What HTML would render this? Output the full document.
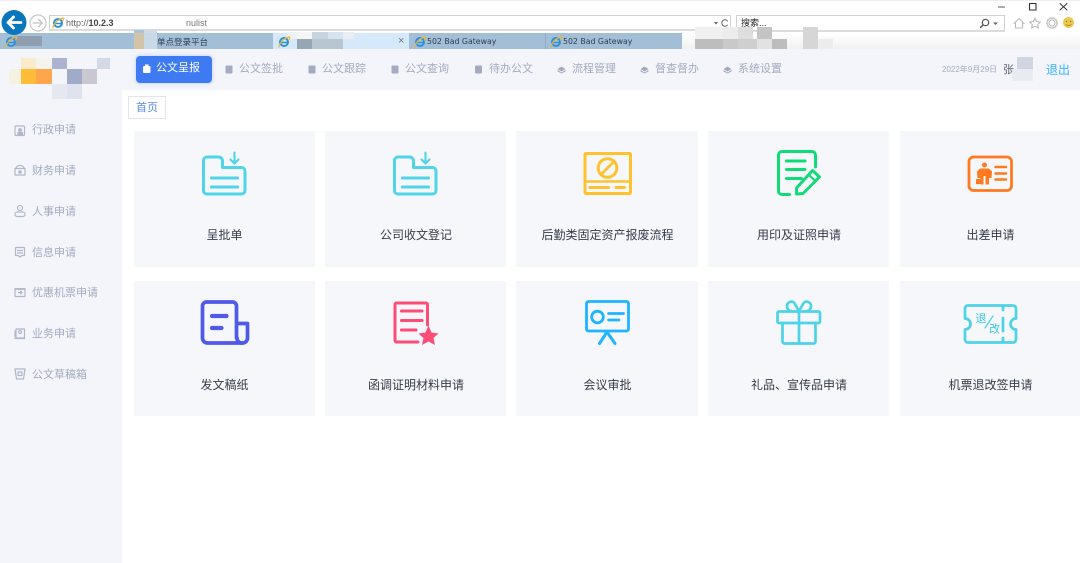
<!DOCTYPE html>
<html lang="zh"><head><meta charset="utf-8"><title>公文呈报</title>
<style>
*{box-sizing:border-box}
html,body{margin:0;padding:0;width:1080px;height:563px;overflow:hidden;background:#fff;font-family:"Liberation Sans","Noto Sans CJK SC",sans-serif}
#w{position:absolute;left:0;top:0;width:1080px;height:563px;overflow:hidden;filter:blur(.3px)}
.a{position:absolute}
.t{position:absolute;white-space:nowrap;line-height:16px}
.nav{color:#a4abc0;font-size:11px;top:61px}
.side{color:#a4abc0;font-size:11px;left:32px}
.card{position:absolute;background:#f6f7fb}
.lab{position:absolute;font-size:12px;color:#373c4a;white-space:nowrap;line-height:16px;transform:translateX(-50%)}
.m{position:absolute}
.tabt{position:absolute;top:36px;font:7.8px/12px "DejaVu Sans",sans-serif;color:#2c3e50;white-space:nowrap}
svg{position:absolute;left:0;top:0}
</style></head><body><div id="w">
<div class="a" style="left:0;top:0;width:1080px;height:1px;background:#f0f0f0"></div>
<div class="a" style="left:49px;top:15px;width:682px;height:16px;border:1px solid #d0d0d0;border-bottom:2px solid #dcdcdc;background:#fff"></div>
<div class="a" style="left:736px;top:15px;width:269px;height:17px;border:1px solid #d0d0d0;border-bottom:2px solid #dcdcdc;background:#fff"></div>
<div class="t" style="left:66px;top:15px;font-size:9px;color:#666">http://<b style="color:#444;font-weight:700">10.2.3</b></div>
<div class="t" style="left:186px;top:15px;font-size:9px;color:#777">nulist</div>
<div class="t" style="left:741px;top:15px;font-size:9px;color:#222">搜索...</div>

<!-- tab strip -->
<div class="a" style="left:0;top:33px;width:683px;height:16px;background:#a3bfd7"></div>
<div class="a" style="left:273px;top:33px;width:136px;height:16px;background:#d6e9fa"></div>
<div class="a" style="left:545px;top:33px;width:1px;height:16px;background:#93aec7"></div>
<div class="a" style="left:682px;top:33px;width:398px;height:16px;background:linear-gradient(#fff,#f1f1f1)"></div>
<div class="t" style="left:157px;top:34px;font-size:8.5px;color:#2d3d4d">单点登录平台</div>
<div class="tabt" style="left:427px">502 Bad Gateway</div>
<div class="tabt" style="left:563px">502 Bad Gateway</div>
<div class="t" style="left:398px;top:33px;font-size:11px;color:#777">×</div>

<!-- mosaics tab strip -->
<div class="m" style="left:134px;top:30px;width:10px;height:3px;background:#a9c3d8"></div>
<div class="m" style="left:144px;top:30px;width:13px;height:3px;background:#cfdce8"></div>
<div class="m" style="left:134px;top:33px;width:10px;height:19px;background:#d2c4a8"></div>
<div class="m" style="left:144px;top:33px;width:13px;height:19px;background:#c8d9e8"></div>
<div class="m" style="left:14px;top:36px;width:28px;height:10px;background:#8f9faf"></div>
<div class="m" style="left:287px;top:32px;width:10px;height:7px;background:#eef2f5"></div>
<div class="m" style="left:297px;top:32px;width:15px;height:7px;background:#f3f5f7"></div>
<div class="m" style="left:312px;top:32px;width:16px;height:7px;background:#c7d3dd"></div>
<div class="m" style="left:328px;top:32px;width:15px;height:7px;background:#d7e4ef"></div>
<div class="m" style="left:343px;top:32px;width:11px;height:7px;background:#e8eef2"></div>
<div class="m" style="left:297px;top:39px;width:15px;height:10px;background:#97a6b3"></div>
<div class="m" style="left:312px;top:39px;width:31px;height:10px;background:#b8c6d1"></div>
<div class="m" style="left:695px;top:39px;width:28px;height:10px;background:#bdbdbd"></div>
<div class="m" style="left:695px;top:27px;width:28px;height:12px;background:#f0f0f0"></div>
<div class="m" style="left:723px;top:27px;width:15px;height:12px;background:#ececec"></div>
<div class="m" style="left:738px;top:27px;width:15px;height:12px;background:#dedede"></div>
<div class="m" style="left:757px;top:27px;width:15px;height:12px;background:#c4c4c4"></div>
<div class="m" style="left:723px;top:39px;width:15px;height:10px;background:#c9c9c9"></div>
<div class="m" style="left:738px;top:39px;width:19px;height:10px;background:#cfcfcf"></div>
<div class="m" style="left:757px;top:39px;width:15px;height:10px;background:#e2e2e2"></div>
<div class="m" style="left:772px;top:39px;width:15px;height:10px;background:#bdbdbd"></div>
<div class="m" style="left:803px;top:27px;width:15px;height:22px;background:#d6d6d6"></div>
<div class="m" style="left:818px;top:39px;width:15px;height:10px;background:#ececec"></div>

<!-- header & sidebar -->
<div class="a" style="left:0;top:49px;width:1080px;height:41px;background:#f3f5fa"></div>
<div class="a" style="left:0;top:90px;width:122px;height:473px;background:#f3f5fa"></div>
<!-- logo mosaic -->
<div class="m" style="left:21px;top:58px;width:15px;height:11px;background:#f8eccd"></div>
<div class="m" style="left:36px;top:58px;width:15px;height:11px;background:#f5f3ee"></div>
<div class="m" style="left:52px;top:58px;width:15px;height:11px;background:#abb3d0"></div>
<div class="m" style="left:97px;top:58px;width:13px;height:11px;background:#d4d9e8"></div>
<div class="m" style="left:9px;top:69px;width:12px;height:15px;background:#f6f2e2"></div>
<div class="m" style="left:21px;top:69px;width:15px;height:15px;background:#ffbc38"></div>
<div class="m" style="left:36px;top:69px;width:16px;height:15px;background:#ffa54c"></div>
<div class="m" style="left:67px;top:69px;width:15px;height:15px;background:#a0aac9"></div>
<div class="m" style="left:82px;top:69px;width:15px;height:15px;background:#cbc7d0"></div>
<div class="m" style="left:52px;top:84px;width:15px;height:15px;background:#e5e8f1"></div>
<div class="m" style="left:67px;top:84px;width:15px;height:15px;background:#dfe3ee"></div>

<!-- nav -->
<div class="a" style="left:136px;top:56px;width:76px;height:27px;background:#3e7bf2;border-radius:4px;box-shadow:0 0 4px rgba(62,123,242,.35)"></div>
<div class="t" style="left:156px;top:60px;font-size:11px;color:#fff">公文呈报</div>
<div class="t nav" style="left:239px">公文签批</div>
<div class="t nav" style="left:322px">公文跟踪</div>
<div class="t nav" style="left:405px">公文查询</div>
<div class="t nav" style="left:489px">待办公文</div>
<div class="t nav" style="left:572px">流程管理</div>
<div class="t nav" style="left:655px">督查督办</div>
<div class="t nav" style="left:738px">系统设置</div>
<div class="t" style="left:942px;top:62px;font-size:8px;color:#a4abc0">2022年9月29日</div>
<div class="t" style="left:1003px;top:62px;font-size:11px;color:#5a6170">张</div>
<div class="m" style="left:1017px;top:57px;width:16px;height:15px;background:#d0d5e0"></div>
<div class="m" style="left:1012px;top:69px;width:21px;height:12px;background:#e9ebf2"></div>
<div class="t" style="left:1046px;top:62px;font-size:12px;color:#35b4ff">退出</div>

<!-- breadcrumb -->
<div class="a" style="left:128px;top:96px;width:38px;height:23px;border:1px solid #e3e5ea;background:#fff"></div>
<div class="t" style="left:136px;top:100px;font-size:11px;color:#5a8cdc">首页</div>

<!-- side -->
<div class="t side" style="top:122px">行政申请</div>
<div class="t side" style="top:163px">财务申请</div>
<div class="t side" style="top:204px">人事申请</div>
<div class="t side" style="top:245px">信息申请</div>
<div class="t side" style="top:285px">优惠机票申请</div>
<div class="t side" style="top:326px">业务申请</div>
<div class="t side" style="top:367px">公文草稿箱</div>

<!-- cards -->
<div class="card" style="left:134px;top:131px;width:181px;height:136px"></div>
<div class="card" style="left:325px;top:131px;width:181px;height:136px"></div>
<div class="card" style="left:516px;top:131px;width:182px;height:136px"></div>
<div class="card" style="left:708px;top:131px;width:181px;height:136px"></div>
<div class="card" style="left:900px;top:131px;width:180px;height:136px"></div>
<div class="card" style="left:134px;top:281px;width:181px;height:135px"></div>
<div class="card" style="left:325px;top:281px;width:181px;height:135px"></div>
<div class="card" style="left:516px;top:281px;width:182px;height:135px"></div>
<div class="card" style="left:708px;top:281px;width:181px;height:135px"></div>
<div class="card" style="left:900px;top:281px;width:180px;height:135px"></div>

<div class="lab" style="left:224.5px;top:227px">呈批单</div>
<div class="lab" style="left:416px;top:227px">公司收文登记</div>
<div class="lab" style="left:607.5px;top:227px">后勤类固定资产报废流程</div>
<div class="lab" style="left:799px;top:227px">用印及证照申请</div>
<div class="lab" style="left:990.5px;top:227px">出差申请</div>
<div class="lab" style="left:224.5px;top:377px">发文稿纸</div>
<div class="lab" style="left:416px;top:377px">函调证明材料申请</div>
<div class="lab" style="left:607.5px;top:377px">会议审批</div>
<div class="lab" style="left:799px;top:377px">礼品、宣传品申请</div>
<div class="lab" style="left:990.5px;top:377px">机票退改签申请</div>

<svg width="1080" height="563" viewBox="0 0 1080 563" fill="none" stroke-linecap="round" stroke-linejoin="round">
<defs>
<g id="ie">
<circle cx="6" cy="6" r="4" stroke="#2f8fd8" stroke-width="2"/>
<path d="M2 6.500H10" stroke="#2f8fd8" stroke-width="1.400"/>
<path d="M0.800 11C1.500 7 6 2 11 1C12.500 1 11.500 3 10.500 4" stroke="#e9b83a" stroke-width="1.200"/>
</g>
<g id="folder">
<path d="M207 157H218.500a4 4 0 0 1 4 4V167.500H241.500a3.500 3.500 0 0 1 3.500 3.500V190.500a3.500 3.500 0 0 1-3.500 3.500H207a3.500 3.500 0 0 1-3.500-3.500V160.500a3.500 3.500 0 0 1 3.500-3.500Z" stroke="#4fd4e8" stroke-width="3"/>
<path d="M234.500 152.500V163M230.500 159.500L234.500 163.500L238.500 159.500" stroke="#4fd4e8" stroke-width="2.100"/>
<path d="M211.500 178H237.500M211.500 187H237.500" stroke="#4fd4e8" stroke-width="3.100"/>
</g>
</defs>

<!-- browser chrome icons -->
<circle cx="14" cy="22.500" r="12.500" fill="#0a76bd"/>
<path d="M8 22.500H21M13.500 17L8 22.500L13.500 28" stroke="#fff" stroke-width="2.800"/>
<circle cx="38" cy="23" r="8" stroke="#c8c8c8" stroke-width="1.200" fill="#fff"/>
<path d="M33 23H42M38.500 19.500L42.500 23L38.500 26.500" stroke="#c4c4c4" stroke-width="1.200"/>
<use href="#ie" x="52" y="17"/>
<use href="#ie" x="5" y="36"/>
<use href="#ie" x="278" y="36"/>
<use href="#ie" x="414" y="36"/>
<use href="#ie" x="550" y="36"/>
<path d="M998.500 7H1004.500" stroke="#555" stroke-width="1"/>
<rect x="1029.500" y="3.500" width="6.500" height="6.500" stroke="#333" stroke-width="1.100"/>
<path d="M1060 3.500L1067 10M1067 3.500L1060 10" stroke="#333" stroke-width="1"/>
<circle cx="985.500" cy="22.500" r="3.200" stroke="#555" stroke-width="1.200"/>
<path d="M983 25L980.500 27.500" stroke="#555" stroke-width="1.400"/>
<path d="M993 22.500H998L995.500 25Z" fill="#666"/>
<path d="M714 22H718L716 24.500Z" fill="#666"/>
<path d="M727.500 21A3.200 3.200 0 1 0 727.500 25" stroke="#666" stroke-width="1"/>
<path d="M1014 23.500L1019 18.500L1024 23.500M1015.500 23V28H1022.500V23" stroke="#b9b9b9" stroke-width="1.100"/>
<path d="M1035 18L1036.600 21.500L1040.500 22L1037.700 24.500L1038.400 28L1035 26.200L1031.600 28L1032.300 24.500L1029.500 22L1033.400 21.500Z" stroke="#b9b9b9" stroke-width="1.100"/>
<circle cx="1052" cy="23" r="3" stroke="#b9b9b9" stroke-width="1.100"/>
<circle cx="1052" cy="23" r="5" stroke="#c4c4c4" stroke-width="1.600" stroke-dasharray="1.500 1.500"/>
<circle cx="1068.500" cy="22.500" r="5.500" fill="#eec84e"/>
<circle cx="1066.500" cy="21.500" r=".7" fill="#8c7a30"/><circle cx="1070.500" cy="21.500" r=".7" fill="#8c7a30"/>
<path d="M1066 24.500Q1068.500 26.500 1071 24.500" stroke="#8c7a30" stroke-width=".7"/>

<!-- nav icons -->
<g stroke="none">
<rect x="143" y="66" width="7.500" height="7" rx="1" fill="#fff"/><rect x="145" y="64.500" width="3.500" height="2" fill="#fff"/>
<rect x="225.500" y="65.500" width="7" height="8" rx="1" fill="#a4abc0"/>
<rect x="308.500" y="65.500" width="7" height="8" rx="1" fill="#a4abc0"/>
<rect x="391.500" y="65.500" width="7" height="8" rx="1" fill="#a4abc0"/>
<rect x="475" y="65.500" width="7" height="8" rx="1" fill="#a4abc0"/>
<path d="M557.500 69L561.500 66.500L565.500 69L561.500 71.500Z M557.500 70L561.500 72.500L565.500 70V71.500L561.500 73.500L557.500 71.500Z" fill="#a4abc0"/>
<path d="M640.500 69L644.500 66.500L648.500 69L644.500 71.500Z M640.500 70L644.500 72.500L648.500 70V71.500L644.500 73.500L640.500 71.500Z" fill="#a4abc0"/>
<path d="M723.500 69L727.500 66.500L731.500 69L727.500 71.500Z M723.500 70L727.500 72.500L731.500 70V71.500L727.500 73.500L723.500 71.500Z" fill="#a4abc0"/>
</g>

<!-- sidebar icons -->
<g stroke="#b0b7ca" stroke-width="1.200">
<rect x="15" y="126" width="9.500" height="9.500" rx="1"/><path d="M18 135V132.500H22.500V135" fill="#b0b7ca"/><circle cx="20" cy="130" r="1.300" fill="#b0b7ca"/>
<path d="M15 168.500H25V175H15Z"/><path d="M15.500 168.500Q17 165.500 20 165.500Q23 165.500 24.500 168.500"/><rect x="19" y="171" width="2" height="2" fill="#b0b7ca"/>
<circle cx="20" cy="208" r="2.500"/><rect x="15" y="212" width="10" height="4.500" rx="2.200"/>
<path d="M15.500 247.500H24.500V255.500H22L20 257L18 255.500H15.500Z"/><path d="M17.500 250.500H22.500M17.500 253H22.500"/>
<rect x="15" y="289" width="10" height="7.500"/><path d="M15 289H25" stroke-width="1.800"/><path d="M18.500 292.500H22M20.500 291L22 292.500L20.500 294"/>
<rect x="16" y="329" width="8.500" height="9"/><circle cx="20" cy="332" r="1.500"/><path d="M15 338.500H24.500"/><path d="M15 331V337"/>
<path d="M15 369H25L23.500 379H16.500Z"/><path d="M18 372H22V375.500H18Z"/>
</g>

<!-- card icons -->
<use href="#folder"/>
<use href="#folder" x="191"/>

<!-- asset scrap -->
<g stroke="#ffc22e">
<rect x="585" y="153.500" width="45.500" height="40" rx="1" stroke-width="3"/>
<path d="M585 181.500H630" stroke-width="2.600"/>
<circle cx="607.500" cy="168" r="9.300" stroke-width="3"/>
<path d="M601.500 174L613.500 162" stroke-width="2.800"/>
<path d="M590 187.500H608.500M616 187.500H624.500" stroke-width="3"/>
</g>

<!-- seal -->
<g stroke="#0fdc78">
<path d="M789.500 194.500H782a3.500 3.500 0 0 1-3.500-3.500V155a3.500 3.500 0 0 1 3.500-3.500H812a3.500 3.500 0 0 1 3.500 3.500V167" stroke-width="3"/>
<path d="M786.500 161H805M786.500 169.500H805M786.500 178.500H801.500" stroke-width="3"/>
<path d="M812.500 170.500L819.500 177L803 193.500L796.500 194V188Z" stroke-width="2.900"/>
<path d="M808.500 174.500L815.500 181" stroke-width="2"/>
</g>

<!-- travel -->
<rect x="969" y="157" width="42.500" height="33.500" rx="4.500" stroke="#ff7a1f" stroke-width="2.800"/>
<path d="M995.500 167H1006M995.500 173.500H1006M995.500 179.500H1006" stroke="#ff7a1f" stroke-width="2.500"/>
<circle cx="984.500" cy="165" r="2.500" fill="#ff7a1f"/>
<path d="M980 168.500H989L992 171.500L991.500 178H989V184.500H985.500V176H983.500V184.500H980.500V178H977.500L977 171.500Z" fill="#ff7a1f"/>
<rect x="976" y="179" width="4.500" height="5" fill="#ff7a1f"/>

<!-- paper -->
<g stroke="#4f5be8">
<path d="M236.500 338V306a4 4 0 0 0-4-4H206.500a4 4 0 0 0-4 4V338a5 5 0 0 0 5 5H242.500a5 5 0 0 0 5-5V323.500H237" stroke-width="3.700"/>
<path d="M237 338a5 5 0 0 0 5 5" stroke-width="3.700"/>
<path d="M212 316H226.500M212 328H221.500" stroke-width="4.200"/>
</g>

<!-- letter -->
<g stroke="#fb4d77">
<path d="M418 342H396.500a1.500 1.500 0 0 1-1.500-1.500V304.500a1.500 1.500 0 0 1 1.500-1.500H426a1.500 1.500 0 0 1 1.500 1.500V325" stroke-width="3"/>
<path d="M401.500 311H422M401.500 320.500H422M401.500 330H416" stroke-width="3.100"/>
</g>
<path d="M428.500 325.500L431.500 332.500L438.500 333.500L433.500 338L435 345L428.500 341.500L422 345L423.500 338L418.500 333.500L425.500 332.500Z" fill="#fb4d77"/>

<!-- meeting -->
<g stroke="#1fb4ff">
<rect x="586.500" y="301.500" width="42" height="29.500" rx="2" stroke-width="2.800"/>
<circle cx="597.500" cy="317" r="5.800" stroke-width="2.800"/>
<path d="M608.500 313.500H623.500M608.500 320H619" stroke-width="2.700"/>
<path d="M607 332L599.500 343.500M607 332L615 343.500" stroke-width="3"/>
</g>

<!-- gift -->
<g stroke="#4dd3e8" stroke-width="2.700">
<rect x="777.500" y="311.500" width="42.500" height="11.500" rx="1.500"/>
<path d="M782.500 323V341.500a2 2 0 0 0 2 2H813.500a2 2 0 0 0 2-2V323M799 311.500V343.500"/>
<path d="M799 311L794 302.500C791.500 300.500 787.500 302 787 305.500C786.800 308.500 788.500 311 791 311"/>
<path d="M799 311L804 302.500C806.500 300.500 810.500 302 811 305.500C811.200 308.500 809.500 311 807 311"/>
</g>

<!-- ticket -->
<g stroke="#4dd3e8" stroke-width="2.700">
<path d="M968 305.500H1013a3 3 0 0 1 3 3V318.500a5.500 5.500 0 0 0 0 11V339.500a3 3 0 0 1-3 3H968a3 3 0 0 1-3-3V329.500a5.500 5.500 0 0 0 0-11V308.500a3 3 0 0 1 3-3Z"/>
<path d="M1003 307V310M1003 318V331M1003 338V341"/>
<path d="M985 328L993 316" stroke-width="1.300"/>
</g>
<text x="975.500" y="322" font-size="11" fill="#36c8e0" font-family="'Liberation Sans','Noto Sans CJK SC',sans-serif">退</text>
<text x="989" y="332.500" font-size="11" fill="#36c8e0" font-family="'Liberation Sans','Noto Sans CJK SC',sans-serif">改</text>
</svg>
</div></body></html>
